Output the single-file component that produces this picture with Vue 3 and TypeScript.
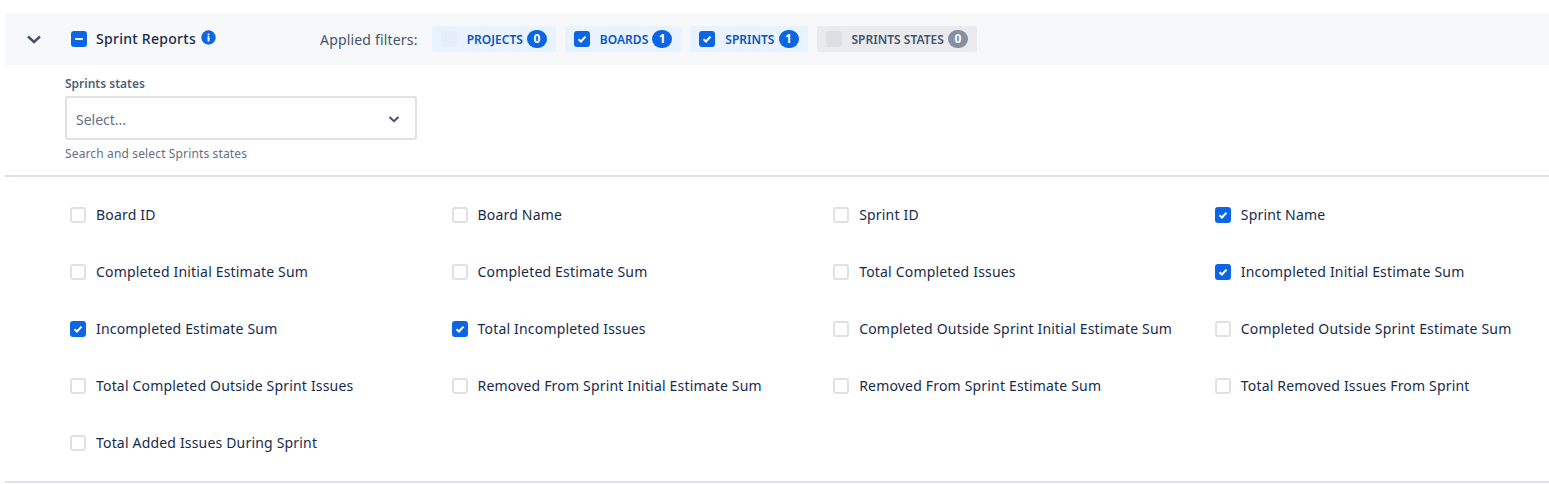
<template>
  <div class="page">
    <div class="report-header">
      <svg class="chevron" width="16" height="16" viewBox="0 0 16 16">
        <path d="M2 5.5 8 11 14 5.5" fill="none" stroke="#42526e" stroke-width="2.4" />
      </svg>
      <span class="box checked">
        <svg width="16" height="16" viewBox="0 0 16 16"><rect x="4" y="7" width="8" height="2" rx="1" fill="#fff" /></svg>
      </span>
      <span class="report-title">Sprint Reports</span>
      <svg class="info" width="15" height="15" viewBox="0 0 15 15">
        <circle cx="7.5" cy="7.5" r="7.2" fill="#0c66e4" />
        <rect x="6.5" y="6.4" width="2" height="5" fill="#fff" />
        <rect x="6.5" y="3.4" width="2" height="2" rx="1" fill="#fff" />
      </svg>
      <span class="applied">Applied filters:</span>
      <div class="chips">
        <div v-for="chip in chips" :key="chip.label" class="chip" :class="{ muted: chip.muted }">
          <span class="box chip-box" :class="{ checked: chip.checked, empty: !chip.checked }">
            <svg v-if="chip.checked" width="16" height="16" viewBox="0 0 16 16">
              <path d="M4.5 8.2 7 10.5 11.5 5.6" fill="none" stroke="#fff" stroke-width="2" />
            </svg>
          </span>
          <span class="chip-label">{{ chip.label }}</span>
          <span class="count">{{ chip.count }}</span>
        </div>
      </div>
    </div>

    <div class="filter-field">
      <label class="field-label">Sprints states</label>
      <div class="select">
        <span class="placeholder">Select...</span>
        <svg width="12" height="12" viewBox="0 0 12 12">
          <path d="M1.5 4 6 8.2 10.5 4" fill="none" stroke="#42526e" stroke-width="2" />
        </svg>
      </div>
      <div class="help">Search and select Sprints states</div>
    </div>

    <div class="columns">
      <div v-for="col in columns" :key="col.name" class="column-item">
        <span class="box" :class="col.checked ? 'checked' : 'unchecked'">
          <svg v-if="col.checked" width="16" height="16" viewBox="0 0 16 16">
            <path d="M4.5 8.2 7 10.5 11.5 5.6" fill="none" stroke="#fff" stroke-width="2" />
          </svg>
        </span>
        <span class="column-name">{{ col.name }}</span>
      </div>
    </div>
  </div>
</template>

<script setup lang="ts">
interface Chip {
  label: string;
  count: number;
  checked: boolean;
  muted?: boolean;
}

const chips: Chip[] = [
  { label: 'PROJECTS', count: 0, checked: false },
  { label: 'BOARDS', count: 1, checked: true },
  { label: 'SPRINTS', count: 1, checked: true },
  { label: 'SPRINTS STATES', count: 0, checked: false, muted: true }
];

const checkedColumns = [
  'Sprint Name',
  'Incompleted Initial Estimate Sum',
  'Incompleted Estimate Sum',
  'Total Incompleted Issues'
];

const columns = [
  'Board ID',
  'Board Name',
  'Sprint ID',
  'Sprint Name',
  'Completed Initial Estimate Sum',
  'Completed Estimate Sum',
  'Total Completed Issues',
  'Incompleted Initial Estimate Sum',
  'Incompleted Estimate Sum',
  'Total Incompleted Issues',
  'Completed Outside Sprint Initial Estimate Sum',
  'Completed Outside Sprint Estimate Sum',
  'Total Completed Outside Sprint Issues',
  'Removed From Sprint Initial Estimate Sum',
  'Removed From Sprint Estimate Sum',
  'Total Removed Issues From Sprint',
  'Total Added Issues During Sprint'
].map((name) => ({ name, checked: checkedColumns.includes(name) }));
</script>

<style>
body {
  background: #fff;
}
</style>

<style scoped>
.page {
  box-sizing: border-box;
  height: 484px;
  padding: 13px 0 0 5px;
  font-family: 'Noto Sans', 'Open Sans', sans-serif;
  color: #172b4d;
  overflow: hidden;
}

.report-header {
  display: flex;
  align-items: center;
  height: 52px;
  background: #f7f8f9;
}

.chevron {
  margin-left: 21px;
}

.box {
  box-sizing: border-box;
  flex: none;
  display: inline-flex;
  width: 16px;
  height: 16px;
  border-radius: 3px;
}

.report-header > .box {
  margin-left: 29px;
}

.checked {
  background: #0c66e4;
}

.unchecked {
  background: #fff;
  border: 2px solid #dfe1e6;
}

.empty {
  background: #e4edf8;
}

.report-title {
  margin-left: 9px;
  margin-top: -2px;
  font-size: 14px;
  font-weight: 500;
  letter-spacing: 0.28px;
}

.info {
  margin-left: 5px;
  margin-top: -3px;
}

.applied {
  margin-left: 104px;
  font-size: 14px;
  color: #44546f;
  letter-spacing: 0.18px;
}

.chips {
  display: flex;
  gap: 9px;
  margin-left: 14px;
}

.chip {
  display: flex;
  align-items: center;
  height: 26px;
  padding: 0 9px;
  background: #e9f2ff;
  border-radius: 3px;
}

.chip-label {
  margin-left: 10px;
  font-size: 12px;
  font-weight: 600;
  color: #0c55bf;
  letter-spacing: 0.02px;
}

.count {
  box-sizing: border-box;
  min-width: 20px;
  height: 18px;
  margin-left: 4px;
  border-radius: 9px;
  background: #0c66e4;
  color: #fff;
  font-size: 12px;
  font-weight: 700;
  line-height: 18px;
  text-align: center;
}

.muted {
  background: #e9ebee;
}

.muted .chip-label {
  color: #44546f;
}

.muted .count {
  background: #8590a2;
}

.muted .empty {
  background: #dcdfe4;
}

.filter-field {
  box-sizing: border-box;
  height: 112px;
  padding: 10px 0 0 60px;
  border-bottom: 2px solid #dfe1e6;
}

.field-label {
  display: block;
  height: 18px;
  font-size: 12px;
  font-weight: 600;
  line-height: 18px;
  color: #505f79;
}

.select {
  box-sizing: border-box;
  display: flex;
  align-items: center;
  justify-content: space-between;
  width: 352px;
  height: 44px;
  margin-top: 3px;
  padding: 2px 15px 0 9px;
  border: 2px solid #dfe1e6;
  border-radius: 3px;
  background: #fff;
}

.placeholder {
  font-size: 14px;
  color: #626f86;
}

.help {
  margin-top: 6px;
  font-size: 12px;
  line-height: 16px;
  color: #626f86;
  letter-spacing: 0.14px;
}

.columns {
  box-sizing: border-box;
  display: grid;
  grid-template-columns: repeat(4, 381.6px);
  grid-auto-rows: 57px;
  height: 306px;
  padding: 9px 0 0 65px;
  border-bottom: 2px solid #dfe1e6;
}

.column-item {
  display: flex;
  align-items: center;
  gap: 10px;
  height: 57px;
}

.column-name {
  font-size: 14px;
  white-space: nowrap;
  letter-spacing: 0.18px;
}
</style>
